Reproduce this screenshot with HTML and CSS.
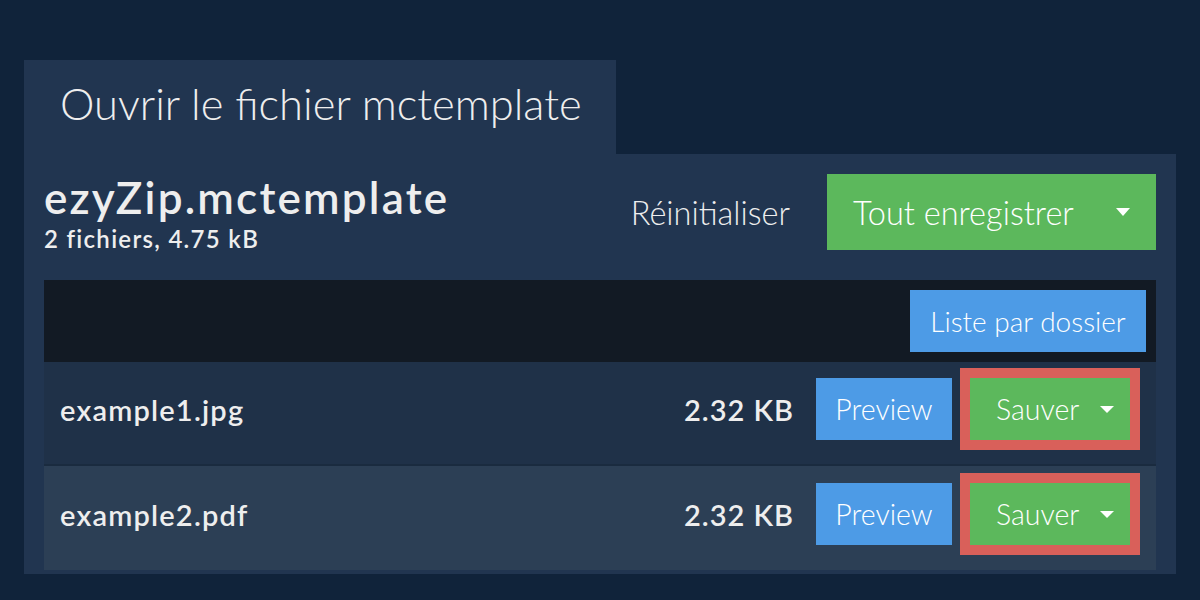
FILE: index.html
```html
<!DOCTYPE html>
<html lang="fr">
<head>
    <meta charset="UTF-8">
    <meta name="viewport" content="width=device-width, initial-scale=1.0">
    <title>Ouvrir le fichier mctemplate</title>
    <link rel="stylesheet" href="styles.css">
</head>
<body>
    <div class="page">
        <div class="tab">Ouvrir le fichier mctemplate</div>

        <div class="panel">
            <div class="header">
                <div class="archive">
                    <div class="archive-name">ezyZip.mctemplate</div>
                    <div class="archive-info">2 fichiers, 4.75 kB</div>
                </div>
                <div class="actions">
                    <span class="reset">Réinitialiser</span>
                    <button class="btn btn-green btn-big">Tout enregistrer <span class="caret"></span></button>
                </div>
            </div>

            <div class="toolbar">
                <button class="btn btn-blue btn-list">Liste par dossier</button>
            </div>

            <div class="files">
                <div class="file-row">
                    <span class="file-name">example1.jpg</span>
                    <span class="file-size">2.32 KB</span>
                    <button class="btn btn-blue btn-row">Preview</button>
                    <div class="highlight">
                        <button class="btn btn-green btn-row btn-save">Sauver <span class="caret caret-small"></span></button>
                    </div>
                </div>
                <div class="file-row alt">
                    <span class="file-name">example2.pdf</span>
                    <span class="file-size">2.32 KB</span>
                    <button class="btn btn-blue btn-row">Preview</button>
                    <div class="highlight">
                        <button class="btn btn-green btn-row btn-save">Sauver <span class="caret caret-small"></span></button>
                    </div>
                </div>
            </div>
        </div>
    </div>
</body>
</html>
```

FILE: styles.css
```css
/* General */
body {
    margin: 0;
    background-color: #10233a;
    color: #eeeeee;
    font-family: Lato, "Open Sans", sans-serif;
}

.page {
    padding: 60px 24px 0 24px;
}

/* Tab */
.tab {
    display: inline-block;
    width: 556px;
    height: 94px;
    line-height: 86px;
    padding-left: 36px;
    background-color: #213550;
    font-size: 43.5px;
    font-weight: 300;
}

/* Panel */
.panel {
    width: 1112px;
    background-color: #213550;
    padding: 20px 20px 4px 20px;
}

.header {
    display: flex;
    justify-content: space-between;
    align-items: flex-start;
    height: 76px;
    margin-bottom: 30px;
}

.archive-name {
    font-size: 44px;
    font-weight: 600;
    letter-spacing: 2.2px;
    line-height: 46px;
}

.archive-info {
    font-size: 24px;
    font-weight: 600;
    letter-spacing: 1.3px;
    line-height: 30px;
    margin-top: 4px;
}

.actions {
    display: flex;
    align-items: center;
    gap: 37px;
}

.reset {
    font-size: 32.5px;
    font-weight: 300;
}

/* Buttons */
.btn {
    border: none;
    color: #ffffff;
    font-family: Lato, "Open Sans", sans-serif;
    font-weight: 300;
    padding: 0;
    cursor: pointer;
}

.btn-green {
    background-color: #5cb85c;
}

.btn-blue {
    background-color: #4d9be6;
}

.btn-big {
    display: flex;
    align-items: center;
    width: 329px;
    height: 76px;
    padding-left: 26px;
    font-size: 32.5px;
}

.caret {
    display: inline-block;
    width: 0;
    height: 0;
    border-left: 7px solid transparent;
    border-right: 7px solid transparent;
    border-top: 8px solid #ffffff;
    margin-left: 42px;
}

.caret-small {
    border-top-width: 7px;
    margin-left: 21px;
}

/* Toolbar */
.toolbar {
    display: flex;
    justify-content: flex-end;
    background-color: #121a24;
    padding: 10px;
}

.btn-list {
    width: 236px;
    height: 62px;
    font-size: 28px;
}

/* File rows */
.file-row {
    display: flex;
    align-items: center;
    height: 104px;
    padding: 0 16px 8px 16px;
    box-sizing: border-box;
    background-color: #1f3148;
    border-bottom: 2px solid #1a2b3f;
}

.file-row.alt {
    background-color: #2c3f55;
    border-bottom: none;
}

.file-name {
    flex: 1;
    font-size: 29px;
    font-weight: 600;
    letter-spacing: 1.2px;
}

.file-size {
    font-size: 29px;
    font-weight: 600;
    letter-spacing: 1px;
    margin-right: 22px;
}

.btn-row {
    height: 62px;
    font-size: 28.5px;
}

.btn-blue.btn-row {
    width: 136px;
    margin-right: 8px;
}

.highlight {
    border: 10px solid #d9605a;
}

.btn-save {
    display: flex;
    align-items: center;
    width: 160px;
    padding-left: 26px;
}
```
